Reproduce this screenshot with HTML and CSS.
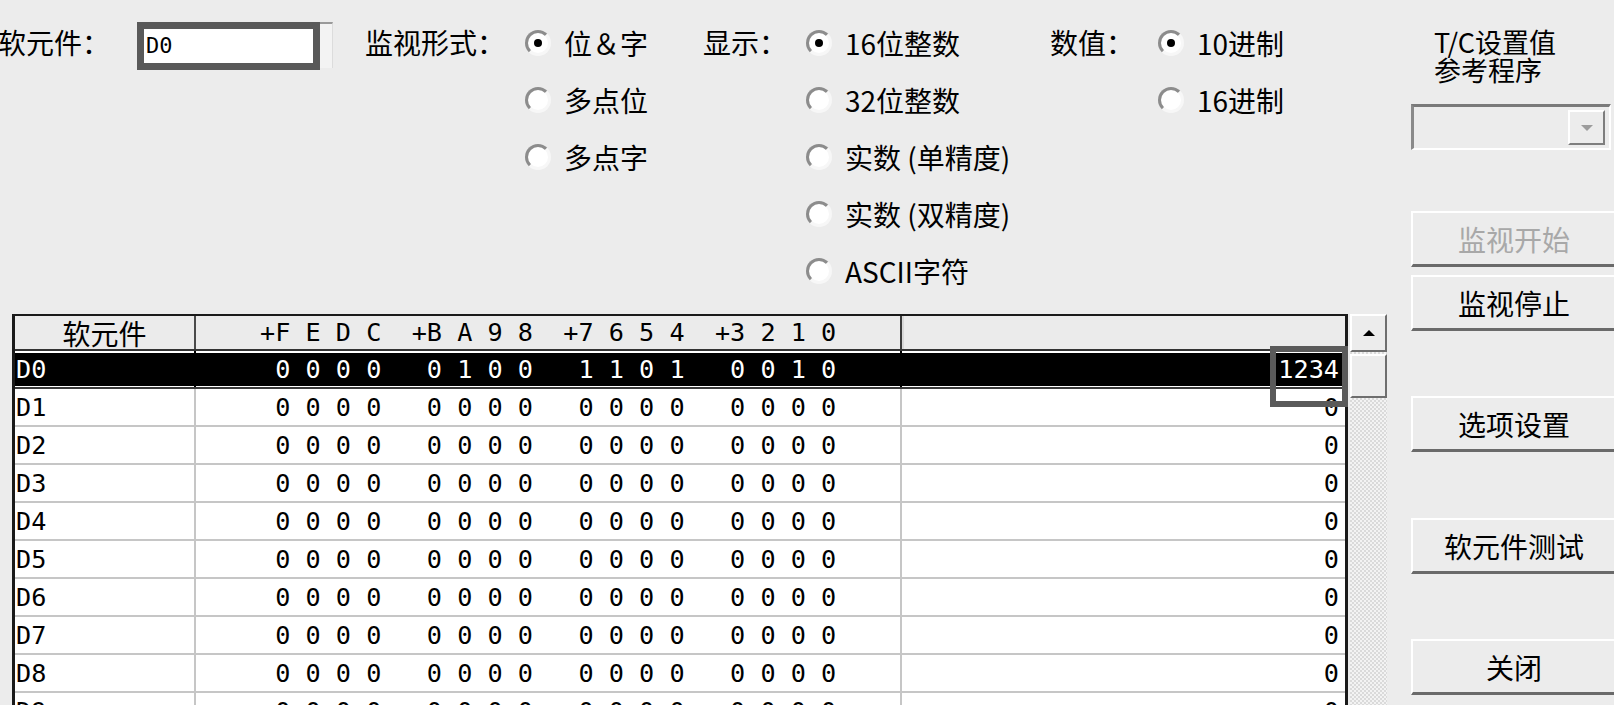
FILE: index.html
```html
<!DOCTYPE html>
<html lang="zh-CN">
<head>
<meta charset="utf-8">
<title>软元件批量监视</title>
<link rel="stylesheet" href="styles.css">
</head>
<body>
<div class="dialog">
  <div class="main">
    <div class="form">
      <div class="grp grp-device">
        <span class="lbl lbl-device">软元件：</span>
        <div class="input-wrap">
          <div class="input">D0</div>
          <div class="input-tail"></div>
        </div>
      </div>
      <div class="grp grp-monitor">
        <span class="lbl lbl-monitor">监视形式：</span>
        <div class="radios radios-monitor">
          <div class="opt"><span class="radio checked"></span><span>位＆字</span></div>
          <div class="opt"><span class="radio"></span><span>多点位</span></div>
          <div class="opt"><span class="radio"></span><span>多点字</span></div>
        </div>
      </div>
      <div class="grp grp-display">
        <span class="lbl lbl-display">显示：</span>
        <div class="radios radios-display">
          <div class="opt"><span class="radio checked"></span><span>16位整数</span></div>
          <div class="opt"><span class="radio"></span><span>32位整数</span></div>
          <div class="opt"><span class="radio"></span><span>实数 (单精度)</span></div>
          <div class="opt"><span class="radio"></span><span>实数 (双精度)</span></div>
          <div class="opt"><span class="radio"></span><span>ASCII字符</span></div>
        </div>
      </div>
      <div class="grp grp-value">
        <span class="lbl lbl-value">数值：</span>
        <div class="radios radios-value">
          <div class="opt"><span class="radio checked"></span><span>10进制</span></div>
          <div class="opt"><span class="radio"></span><span>16进制</span></div>
        </div>
      </div>
    </div>

    <div class="grid-area">
      <div class="table">
        <div class="row head">
          <div class="cell c1 cjk">软元件</div>
          <div class="cell c2 mono">+F E D C  +B A 9 8  +7 6 5 4  +3 2 1 0</div>
          <div class="cell c3"></div>
        </div>
        <div class="row sel">
          <div class="cell c1 mono">D0</div>
          <div class="cell c2 mono"> 0 0 0 0   0 1 0 0   1 1 0 1   0 0 1 0</div>
          <div class="cell c3 mono">1234</div>
        </div>
        <div class="row">
          <div class="cell c1 mono">D1</div>
          <div class="cell c2 mono"> 0 0 0 0   0 0 0 0   0 0 0 0   0 0 0 0</div>
          <div class="cell c3 mono">0</div>
        </div>
        <div class="row">
          <div class="cell c1 mono">D2</div>
          <div class="cell c2 mono"> 0 0 0 0   0 0 0 0   0 0 0 0   0 0 0 0</div>
          <div class="cell c3 mono">0</div>
        </div>
        <div class="row">
          <div class="cell c1 mono">D3</div>
          <div class="cell c2 mono"> 0 0 0 0   0 0 0 0   0 0 0 0   0 0 0 0</div>
          <div class="cell c3 mono">0</div>
        </div>
        <div class="row">
          <div class="cell c1 mono">D4</div>
          <div class="cell c2 mono"> 0 0 0 0   0 0 0 0   0 0 0 0   0 0 0 0</div>
          <div class="cell c3 mono">0</div>
        </div>
        <div class="row">
          <div class="cell c1 mono">D5</div>
          <div class="cell c2 mono"> 0 0 0 0   0 0 0 0   0 0 0 0   0 0 0 0</div>
          <div class="cell c3 mono">0</div>
        </div>
        <div class="row">
          <div class="cell c1 mono">D6</div>
          <div class="cell c2 mono"> 0 0 0 0   0 0 0 0   0 0 0 0   0 0 0 0</div>
          <div class="cell c3 mono">0</div>
        </div>
        <div class="row">
          <div class="cell c1 mono">D7</div>
          <div class="cell c2 mono"> 0 0 0 0   0 0 0 0   0 0 0 0   0 0 0 0</div>
          <div class="cell c3 mono">0</div>
        </div>
        <div class="row">
          <div class="cell c1 mono">D8</div>
          <div class="cell c2 mono"> 0 0 0 0   0 0 0 0   0 0 0 0   0 0 0 0</div>
          <div class="cell c3 mono">0</div>
        </div>
        <div class="row">
          <div class="cell c1 mono">D9</div>
          <div class="cell c2 mono"> 0 0 0 0   0 0 0 0   0 0 0 0   0 0 0 0</div>
          <div class="cell c3 mono">0</div>
        </div>
        <div class="callout"></div>
      </div>
      <div class="vscroll">
        <div class="sb-btn sb-up"></div>
        <div class="sb-btn sb-thumb"></div>
      </div>
    </div>
  </div>

  <div class="side">
    <div class="tc-label">T/C设置值<br>参考程序</div>
    <div class="combo"><div class="combo-btn"></div></div>
    <div class="btn btn-start">监视开始</div>
    <div class="btn btn-stop">监视停止</div>
    <div class="btn btn-opt">选项设置</div>
    <div class="btn btn-test">软元件测试</div>
    <div class="btn btn-close">关闭</div>
  </div>
</div>
</body>
</html>
```
FILE: styles.css
```css
* { box-sizing: border-box; }
html, body { margin: 0; padding: 0; }
body {
  width: 1614px;
  height: 705px;
  overflow: hidden;
  background: #ececec;
  color: #000;
  font-family: "Noto Sans CJK SC", "Noto Sans", sans-serif;
}
.dialog { display: flex; width: 1614px; height: 705px; }
.main { width: 1387px; flex: none; display: flex; flex-direction: column; }

/* ---------- top form ---------- */
.form { height: 314px; flex: none; padding-top: 14px; display: flex; align-items: flex-start; }
.grp { display: flex; align-items: flex-start; flex: none; }
.lbl { font-size: 28px; height: 57px; line-height: 57px; white-space: nowrap; flex: none; }
.grp-device { width: 365px; }
.lbl-device { width: 139px; margin-left: -2px; }
.lbl-monitor { width: 160px; }
.radios-monitor { width: 178px; }
.lbl-display { width: 103px; }
.radios-display { width: 244px; }
.lbl-value { width: 108px; }

.input-wrap { display: flex; margin-top: 8px; }
.input {
  width: 183px; height: 48px;
  border: 7px solid #595959;
  background: #fff;
  font-family: "DejaVu Sans Mono", "Liberation Mono", monospace;
  font-size: 22px; line-height: 34px;
  padding-left: 2px;
}
.input-tail {
  width: 13px; height: 46px;
  border-top: 2px solid #9a9a9a;
  border-right: 1px solid #dcdcdc;
  background: #f3f3f3;
}

.radios { display: flex; flex-direction: column; }
.opt { height: 57px; display: flex; align-items: center; gap: 13px; font-size: 28px; white-space: nowrap; }
.radio {
  position: relative; flex: none;
  width: 26px; height: 26px; border-radius: 50%;
  border: 3px solid; border-color: #8c8c8c #f7f7f7 #f7f7f7 #8c8c8c;
  background: #fff;
}
.radio.checked::after {
  content: ""; position: absolute; left: 50%; top: 50%;
  width: 8px; height: 8px; margin: -4px 0 0 -4px;
  border-radius: 50%; background: #000;
}

/* ---------- table ---------- */
.grid-area { display: flex; margin-left: 12px; flex: 1; min-height: 0; }
.table {
  position: relative;
  width: 1336px; flex: none;
  border: 3px solid #1a1a1a; border-top-width: 2px; border-bottom: none;
  background: #fff;
}
.row { display: flex; height: 38px; border-bottom: 2px solid #c6c6c6; }
.cell { height: 100%; display: flex; align-items: center; white-space: pre; }
.c1 { width: 181px; flex: none; border-right: 2px solid #c6c6c6; padding-left: 1px; }
.c2 { width: 706px; flex: none; border-right: 2px solid #c6c6c6; padding-left: 64px; }
.c3 { flex: 1; justify-content: flex-end; padding-right: 6px; }
.mono { font-family: "DejaVu Sans Mono", "Liberation Mono", monospace; font-size: 25.2px; }
.cjk { font-size: 28px; }

.head { height: 35px; background: #ebebeb; border-bottom: 2px solid #333; }
.head .c1 { justify-content: center; border-right-color: #4a4a4a; padding-left: 0; }
.head .c2 { border-right: 2px solid #3a3a3a; box-shadow: 2px 0 0 #d8d8d8; }

.sel { background: #000; color: #fff; border-bottom-color: #3a3a3a; box-shadow: inset 0 2px 0 #fff, inset 0 -1px 0 #fff; }
.sel .c1, .sel .c2 { border-right-color: #000; }

.callout {
  position: absolute; left: 1255px; top: 30px;
  width: 78px; height: 61px;
  border: 6px solid #5a5a5a;
}

/* ---------- scrollbar ---------- */
.vscroll {
  width: 37px; flex: none; margin-left: 2px;
  display: flex; flex-direction: column;
  background-color: #f3f3f3;
  background-image: repeating-conic-gradient(#dadada 0 25%, transparent 0 50%);
  background-size: 4px 4px;
}
.sb-btn {
  border: 2px solid; border-color: #fff #6e6e6e #6e6e6e #fff;
  background: #ececec;
  display: flex; align-items: center; justify-content: center;
}
.sb-up { height: 38px; }
.sb-up::after {
  content: ""; width: 0; height: 0;
  border-left: 6px solid transparent; border-right: 6px solid transparent;
  border-bottom: 6px solid #000;
}
.sb-thumb { height: 44px; margin-top: 2px; }

/* ---------- right side ---------- */
.side { width: 206px; flex: none; margin-left: 24px; padding-top: 28px; display: flex; flex-direction: column; }
.tc-label { font-size: 27px; line-height: 28px; padding-left: 23px; white-space: nowrap; }
.combo {
  margin-top: 20px; width: 200px; height: 46px;
  border-top: 3px solid #7a7a7a; border-left: 3px solid #8a8a8a;
  border-bottom: 2px solid #fff; border-right: 2px solid #fff;
  background: #ececec;
  display: flex; justify-content: flex-end;
  padding: 3px 4px 3px 0;
}
.combo-btn {
  width: 37px;
  border: 2px solid; border-color: #fff #7e7e7e #7e7e7e #fff;
  background: #ececec;
  display: flex; align-items: center; justify-content: center;
}
.combo-btn::after {
  content: ""; width: 0; height: 0;
  border-left: 6px solid transparent; border-right: 6px solid transparent;
  border-top: 6px solid #9c9c9c;
}
.btn {
  width: 206px; height: 56px; flex: none;
  border: 2px solid; border-color: #fff #6a6a6a #6a6a6a #fff;
  border-bottom-width: 3px;
  background: #ececec;
  font-size: 28px;
  display: flex; align-items: center; justify-content: center;
  white-space: nowrap;
}
.btn-start { margin-top: 61px; color: #a8a8a8; }
.btn-stop { margin-top: 8px; }
.btn-opt { margin-top: 65px; }
.btn-test { margin-top: 66px; }
.btn-close { margin-top: 65px; }
```
